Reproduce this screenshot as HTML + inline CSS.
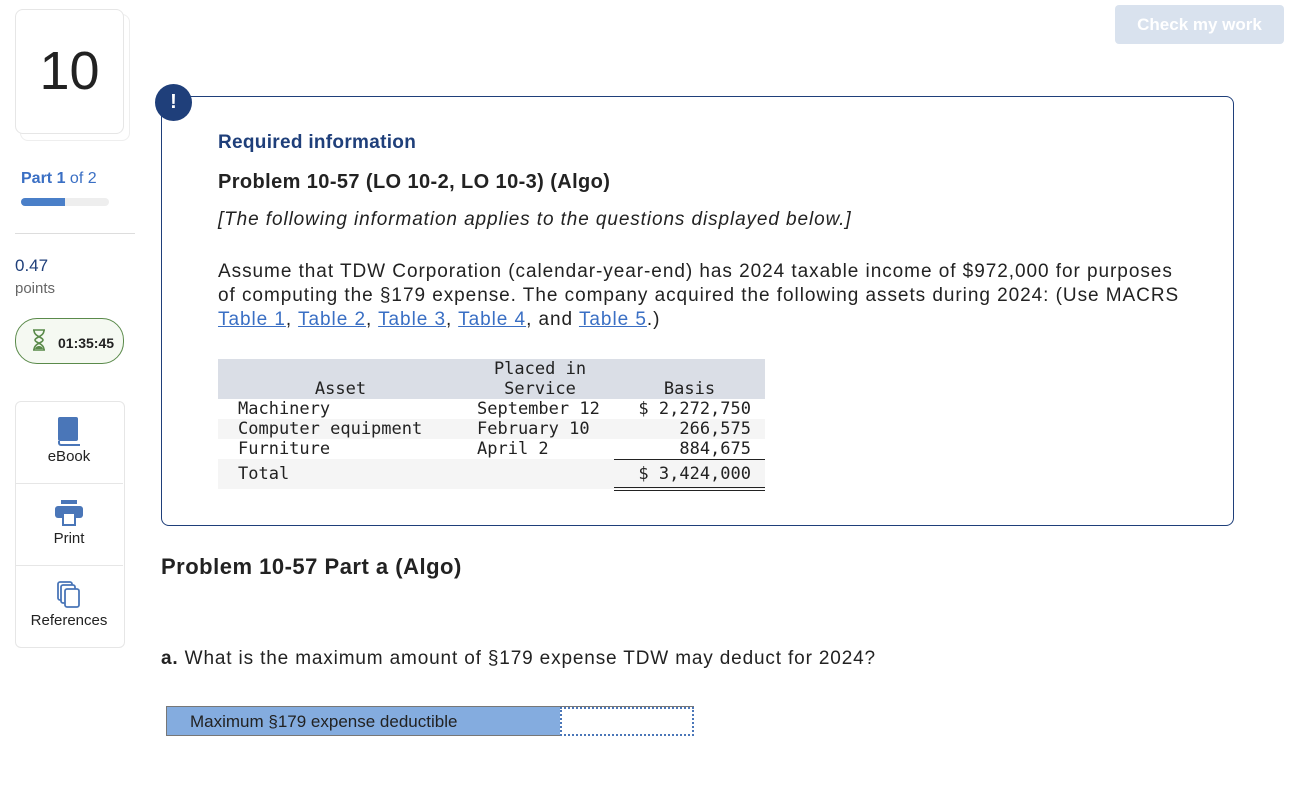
<!DOCTYPE html>
<html><head><meta charset="utf-8"><style>
body{margin:0;width:1314px;height:802px;background:#fff;font-family:"Liberation Sans",sans-serif;color:#222;position:relative;overflow:hidden}
.a{position:absolute}
.mono{font-family:"DejaVu Sans Mono","Liberation Mono",monospace;font-size:17px;color:#222}
a{color:#3a6fc4;text-decoration:underline}
</style></head><body>
<div class="a" style="left:1115px;top:5px;width:169px;height:39px;background:#d9e2ee;border-radius:4px;color:#fff;font-weight:bold;font-size:17px;text-align:center;line-height:39px">Check my work</div>

<div class="a" style="left:20px;top:14px;width:108px;height:125px;border:1px solid #eee;border-radius:8px"></div>
<div class="a" style="left:15px;top:9px;width:107px;height:123px;border:1px solid #e6e6e6;border-radius:8px;background:#fff;font-size:54px;text-align:center;line-height:123px;color:#222">10</div>

<div class="a" style="left:21px;top:170px;font-size:16px;color:#3a6fc4"><b>Part 1</b> of 2</div>
<div class="a" style="left:21px;top:198px;width:88px;height:8px;background:#eee;border-radius:4px"></div>
<div class="a" style="left:21px;top:198px;width:44px;height:8px;background:#4a7fc8;border-radius:4px 0 0 4px"></div>
<div class="a" style="left:15px;top:233px;width:120px;height:1px;background:#ddd"></div>
<div class="a" style="left:15px;top:256px;font-size:17px;color:#1f3f7a">0.47</div>
<div class="a" style="left:15px;top:280px;font-size:15px;color:#666">points</div>
<div class="a" style="left:15px;top:318px;width:107px;height:44px;border:1px solid #5a8a4a;border-radius:22px;background:#f5f9f2"></div>
<svg class="a" style="left:32px;top:329px" width="14" height="22" viewBox="0 0 14 22"><path d="M1 1h12M1 21h12M2 1c0 7 9 7 9 10s-9 3-9 10M12 1c0 7-9 7-9 10s9 3 9 10" stroke="#5a8a4a" stroke-width="1.6" fill="none"/><path d="M3 20c1-4 7-4 8 0z" fill="#5a8a4a"/></svg>
<div class="a" style="left:58px;top:335px;font-size:14px;font-weight:bold;color:#222">01:35:45</div>

<div class="a" style="left:15px;top:401px;width:108px;height:245px;border:1px solid #e6e6e6;border-radius:6px"></div>
<div class="a" style="left:15px;top:483px;width:108px;height:1px;background:#e6e6e6"></div>
<div class="a" style="left:15px;top:565px;width:108px;height:1px;background:#e6e6e6"></div>
<svg class="a" style="left:57px;top:417px" width="24" height="29" viewBox="0 0 24 29"><rect x="1" y="0" width="20" height="24" rx="2" fill="#4a76b8"/><path d="M2 24 v2 a2 2 0 0 0 2 2 h19" stroke="#4a76b8" stroke-width="2" fill="none"/></svg>
<div class="a" style="left:15px;top:448px;width:108px;text-align:center;font-size:15px">eBook</div>
<svg class="a" style="left:55px;top:500px" width="28" height="26" viewBox="0 0 28 26"><rect x="6" y="0" width="16" height="4" fill="#4a76b8"/><rect x="0" y="6" width="28" height="12" rx="3" fill="#4a76b8"/><rect x="8" y="13" width="12" height="12" fill="#fff" stroke="#4a76b8" stroke-width="2"/></svg>
<div class="a" style="left:15px;top:530px;width:108px;text-align:center;font-size:15px">Print</div>
<svg class="a" style="left:57px;top:581px" width="26" height="28" viewBox="0 0 26 28"><rect x="1" y="1" width="14" height="18" rx="2" fill="#fff" stroke="#4a76b8" stroke-width="1.8"/><rect x="4" y="4" width="14" height="18" rx="2" fill="#fff" stroke="#4a76b8" stroke-width="1.8"/><rect x="8" y="8" width="14" height="18" rx="2" fill="#fff" stroke="#4a76b8" stroke-width="1.8"/></svg>
<div class="a" style="left:15px;top:612px;width:108px;text-align:center;font-size:15px">References</div>

<div class="a" style="left:161px;top:96px;width:1071px;height:428px;border:1px solid #1f3f7a;border-radius:8px"></div>
<div class="a" style="left:155px;top:84px;width:37px;height:37px;border-radius:50%;background:#1f3f7a;color:#fff;font-weight:bold;font-size:20px;text-align:center;line-height:37px">!</div>

<div class="a" style="left:218px;top:132px;font-size:19px;font-weight:bold;color:#1f3f7a;letter-spacing:0.3px">Required information</div>
<div class="a" style="left:218px;top:171px;font-size:20px;font-weight:bold;color:#222;letter-spacing:0.4px">Problem 10-57 (LO 10-2, LO 10-3) (Algo)</div>
<div class="a" style="left:218px;top:209px;font-size:19px;font-style:italic;color:#222;letter-spacing:0.9px">[The following information applies to the questions displayed below.]</div>
<div class="a" style="left:218px;top:260px;width:1000px;font-size:19px;line-height:24px;color:#222;white-space:nowrap;letter-spacing:0.95px">Assume that TDW Corporation (calendar-year-end) has 2024 taxable income of $972,000 for purposes<br>of computing the §179 expense. The company acquired the following assets during 2024: (Use MACRS<br><a>Table 1</a>, <a>Table 2</a>, <a>Table 3</a>, <a>Table 4</a>, and <a>Table 5</a>.)</div>

<div class="a" style="left:218px;top:359px;width:547px;height:40px;background:#dadee6"></div>
<div class="a" style="left:218px;top:419px;width:547px;height:20px;background:#f5f5f5"></div>
<div class="a" style="left:218px;top:459px;width:547px;height:30px;background:#f5f5f5"></div>
<div class="a" style="left:614px;top:459px;width:151px;height:1px;background:#222"></div>
<div class="a" style="left:614px;top:487px;width:151px;height:1px;background:#222"></div>
<div class="a" style="left:614px;top:490px;width:151px;height:1px;background:#222"></div>
<div class="a mono" style="left:218px;top:379px;width:245px;text-align:center;line-height:20px">Asset</div>
<div class="a mono" style="left:470px;top:359px;width:140px;text-align:center;line-height:20px">Placed in<br>Service</div>
<div class="a mono" style="left:614px;top:379px;width:151px;text-align:center;line-height:20px">Basis</div>
<div class="a mono" style="left:238px;top:399px;line-height:20px">Machinery<br>Computer equipment<br>Furniture</div>
<div class="a mono" style="left:477px;top:399px;line-height:20px">September 12<br>February 10<br>April 2</div>
<div class="a mono" style="left:600px;top:399px;width:151px;text-align:right;line-height:20px">$ 2,272,750<br>266,575<br>884,675</div>
<div class="a mono" style="left:238px;top:464px;line-height:20px">Total</div>
<div class="a mono" style="left:600px;top:464px;width:151px;text-align:right;line-height:20px">$ 3,424,000</div>

<div class="a" style="left:161px;top:554px;font-size:22px;font-weight:bold;color:#222;letter-spacing:0.5px">Problem 10-57 Part a (Algo)</div>
<div class="a" style="left:161px;top:648px;font-size:19px;color:#222;letter-spacing:0.85px;white-space:nowrap"><b>a.</b> What is the maximum amount of §179 expense TDW may deduct for 2024?</div>

<div class="a" style="left:166px;top:706px;width:528px;height:30px;border:1px solid #777;box-sizing:border-box;background:#84acdf"></div>
<div class="a" style="left:560px;top:707px;width:134px;height:29px;border:2px dotted #4a76b8;box-sizing:border-box;background:#fff"></div>
<div class="a" style="left:190px;top:712px;font-size:17px;color:#222">Maximum §179 expense deductible</div>
</body></html>
